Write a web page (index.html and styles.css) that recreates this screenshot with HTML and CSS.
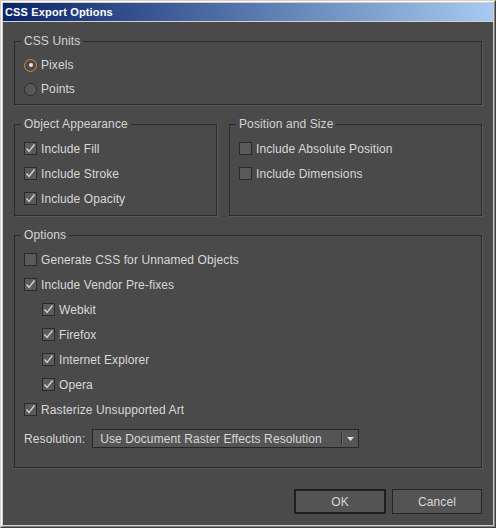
FILE: index.html
```html
<!DOCTYPE html>
<html>
<head>
<meta charset="utf-8">
<link rel="stylesheet" href="styles.css">
</head>
<body>
<div class="window">
  <div class="frame">
    <div class="titlebar">CSS Export Options</div>
    <div class="content">
      <fieldset class="group units">
        <legend>CSS Units</legend>
        <div class="row r24"><span class="radio on"></span>Pixels</div>
        <div class="row r24"><span class="radio"></span>Points</div>
      </fieldset>

      <div class="pair">
        <fieldset class="group appearance">
          <legend>Object Appearance</legend>
          <div class="row"><span class="box"><svg width="11" height="11" viewBox="0 0 11 11"><path d="M1.5 5.5 L4 8.5 L9.5 1.5" fill="none" stroke="#d0d0d0" stroke-width="1.4"/></svg></span>Include Fill</div>
          <div class="row"><span class="box"><svg width="11" height="11" viewBox="0 0 11 11"><path d="M1.5 5.5 L4 8.5 L9.5 1.5" fill="none" stroke="#d0d0d0" stroke-width="1.4"/></svg></span>Include Stroke</div>
          <div class="row"><span class="box"><svg width="11" height="11" viewBox="0 0 11 11"><path d="M1.5 5.5 L4 8.5 L9.5 1.5" fill="none" stroke="#d0d0d0" stroke-width="1.4"/></svg></span>Include Opacity</div>
        </fieldset>
        <fieldset class="group possize">
          <legend>Position and Size</legend>
          <div class="row"><span class="box"></span>Include Absolute Position</div>
          <div class="row"><span class="box"></span>Include Dimensions</div>
        </fieldset>
      </div>

      <fieldset class="group options">
        <legend>Options</legend>
        <div class="row"><span class="box"></span>Generate CSS for Unnamed Objects</div>
        <div class="row"><span class="box"><svg width="11" height="11" viewBox="0 0 11 11"><path d="M1.5 5.5 L4 8.5 L9.5 1.5" fill="none" stroke="#d0d0d0" stroke-width="1.4"/></svg></span>Include Vendor Pre-fixes</div>
        <div class="row sub"><span class="box"><svg width="11" height="11" viewBox="0 0 11 11"><path d="M1.5 5.5 L4 8.5 L9.5 1.5" fill="none" stroke="#d0d0d0" stroke-width="1.4"/></svg></span>Webkit</div>
        <div class="row sub"><span class="box"><svg width="11" height="11" viewBox="0 0 11 11"><path d="M1.5 5.5 L4 8.5 L9.5 1.5" fill="none" stroke="#d0d0d0" stroke-width="1.4"/></svg></span>Firefox</div>
        <div class="row sub"><span class="box"><svg width="11" height="11" viewBox="0 0 11 11"><path d="M1.5 5.5 L4 8.5 L9.5 1.5" fill="none" stroke="#d0d0d0" stroke-width="1.4"/></svg></span>Internet Explorer</div>
        <div class="row sub"><span class="box"><svg width="11" height="11" viewBox="0 0 11 11"><path d="M1.5 5.5 L4 8.5 L9.5 1.5" fill="none" stroke="#d0d0d0" stroke-width="1.4"/></svg></span>Opera</div>
        <div class="row"><span class="box"><svg width="11" height="11" viewBox="0 0 11 11"><path d="M1.5 5.5 L4 8.5 L9.5 1.5" fill="none" stroke="#d0d0d0" stroke-width="1.4"/></svg></span>Rasterize Unsupported Art</div>
        <div class="resrow">
          <span class="reslabel">Resolution:</span>
          <div class="select">
            <span class="value">Use Document Raster Effects Resolution</span>
            <span class="sep"></span>
            <span class="arrow"><svg width="7" height="4" viewBox="0 0 7 4"><polygon points="0,0 7,0 3.5,4" fill="#e0e0e0"/></svg></span>
          </div>
        </div>
      </fieldset>

      <div class="buttons">
        <div class="btn ok">OK</div>
        <div class="btn cancel">Cancel</div>
      </div>
    </div>
  </div>
</div>
</body>
</html>
```

FILE: styles.css
```css
html, body {
  margin: 0;
  padding: 0;
}
body {
  width: 496px;
  height: 528px;
  background: #d4d0c8;
  font-family: "Liberation Sans", Arial, sans-serif;
  font-size: 12px;
  letter-spacing: 0.1px;
  color: #d8d8d8;
  overflow: hidden;
}
.window {
  box-sizing: border-box;
  width: 496px;
  height: 528px;
  border: 1px solid;
  border-color: #d4d0c8 #404040 #404040 #d4d0c8;
}
.frame {
  box-sizing: border-box;
  height: 100%;
  border: 1px solid;
  border-color: #ffffff #808080 #808080 #ffffff;
  padding: 1px;
  background: #d4d0c8;
  display: flex;
  flex-direction: column;
}
.titlebar {
  height: 18px;
  line-height: 18px;
  background: linear-gradient(to right, #0a246a, #a6caf0);
  color: #ffffff;
  font-weight: bold;
  font-size: 11px;
  letter-spacing: 0.15px;
  padding-left: 2px;
  margin-bottom: 1px;
}
.content {
  flex: 1;
  background: #4a4a4a;
  padding: 12px 11px 0;
}
.group {
  margin: 0;
  min-width: 0;
  border: 1px solid #2b2b2b;
  box-shadow: 1px 1px 0 #5a5a5a;
  padding: 5px 9px 3px;
}
.group legend {
  padding: 0 3px;
  margin-left: -3px;
  line-height: 14px;
  color: #d4d4d4;
}
.pair {
  display: flex;
  gap: 12px;
  margin-top: 12px;
}
.appearance {
  width: 203px;
  box-sizing: border-box;
  padding-bottom: 4px;
}
.possize {
  flex: 1;
}
.options {
  margin-top: 12px;
  padding-bottom: 19px;
}
.row {
  height: 25px;
  display: flex;
  align-items: center;
  white-space: nowrap;
}
.row.r24 {
  height: 24px;
}
.row.sub {
  padding-left: 18px;
}
.box {
  box-sizing: border-box;
  width: 13px;
  height: 13px;
  border: 1px solid #2b2b2b;
  background: #5a5a5a;
  margin-right: 4px;
  display: flex;
  align-items: center;
  justify-content: center;
  flex: none;
}
.box svg {
  display: block;
}
.radio {
  box-sizing: border-box;
  width: 13px;
  height: 13px;
  border-radius: 50%;
  border: 1px solid #2b2b2b;
  background: #585858;
  margin-right: 4px;
  flex: none;
  display: flex;
  align-items: center;
  justify-content: center;
}
.radio.on {
  border-color: #dd8a30;
  background: #4a4a4a;
}
.radio.on::after {
  content: "";
  width: 4px;
  height: 4px;
  border-radius: 50%;
  background: #e4e4e4;
}
.resrow {
  margin-top: 7px;
  display: flex;
  align-items: center;
  gap: 7px;
}
.select {
  box-sizing: border-box;
  width: 267px;
  height: 19px;
  border: 1px solid #262626;
  background: #555555;
  display: flex;
  align-items: center;
}
.select .value {
  width: 248px;
  box-sizing: border-box;
  padding-left: 7px;
  white-space: nowrap;
}
.select .sep {
  width: 1px;
  height: 13px;
  background: #333333;
  border-right: 1px solid #6a6a6a;
}
.select .arrow {
  flex: 1;
  display: flex;
  align-items: center;
  justify-content: center;
}
.select .arrow svg {
  display: block;
}
.buttons {
  margin-top: 21px;
  display: flex;
  justify-content: flex-end;
  gap: 6px;
}
.btn {
  box-sizing: border-box;
  height: 25px;
  display: flex;
  align-items: center;
  justify-content: center;
  background: #545454;
  color: #d8d8d8;
}
.ok {
  width: 92px;
  border: 2px solid #1f1f1f;
}
.cancel {
  width: 90px;
  border: 1px solid #262626;
}
```
